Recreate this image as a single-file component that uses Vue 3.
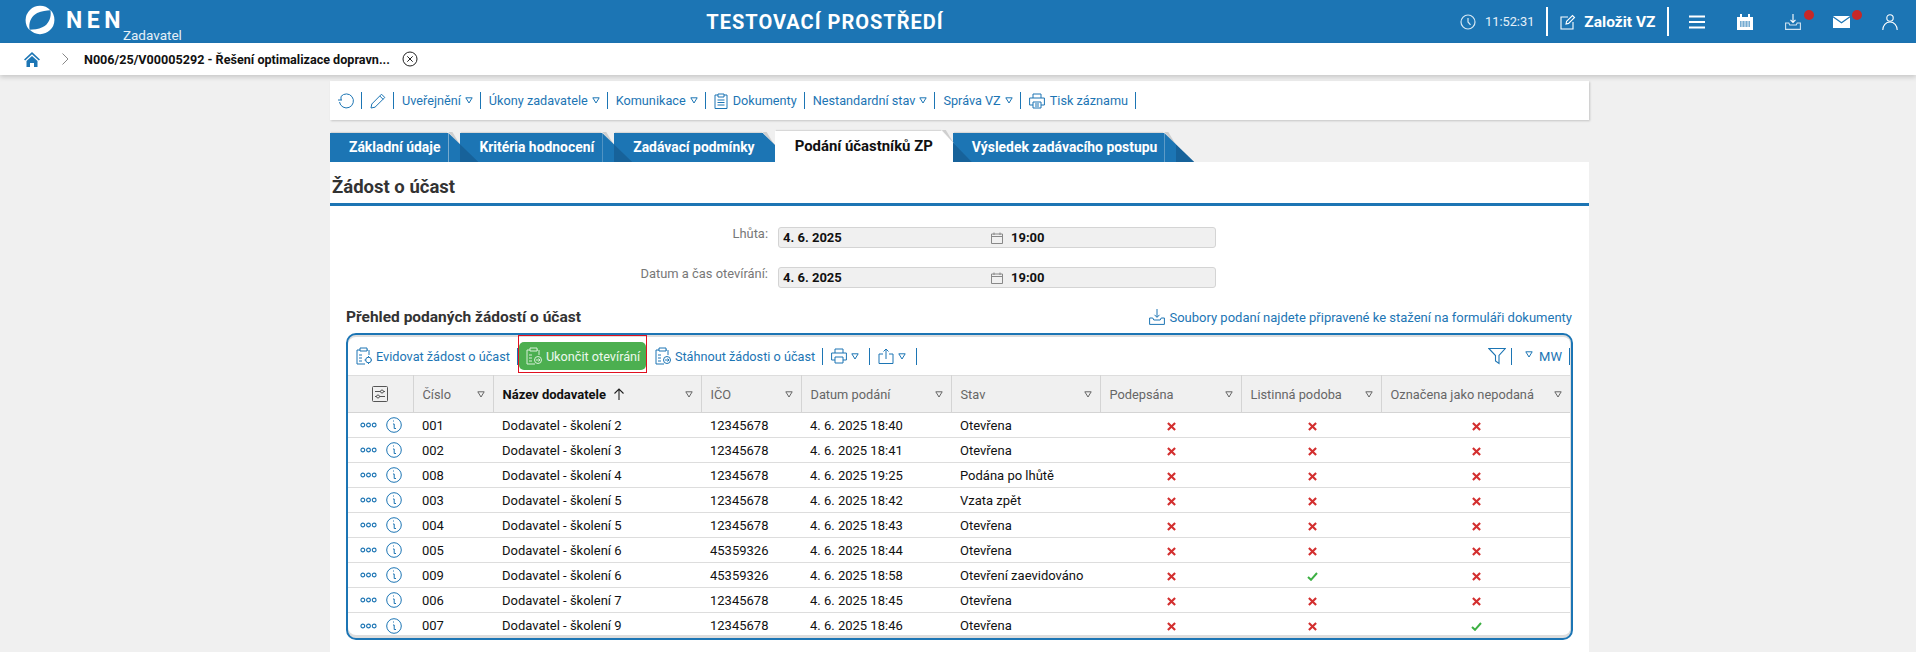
<template>
  <div class="page">
    <header class="topbar">
      <div class="brand">
        <svg class="logo" viewBox="0 0 32 32" width="30" height="30" fill="#fff">
          <path d="M27 5.500A15.200 15.200 0 0 0 5 27C3.500 20 6 12 13 8.500 18 6 23 5.800 27 5.500z" />
          <path d="M27 5.500A15.200 15.200 0 0 0 5 27C3.500 20 6 12 13 8.500 18 6 23 5.800 27 5.500z" transform="rotate(180 16 16)" />
        </svg>
        <span class="nen">NEN</span>
        <span class="role">Zadavatel</span>
      </div>
      <div class="env">TESTOVACÍ PROSTŘEDÍ</div>
      <div class="top-right">
        <svg class="ic clock" viewBox="0 0 16 16" width="16" height="16" fill="none" stroke="#d7e8f4" stroke-width="1.200"><circle cx="8" cy="8" r="7" /><path d="M8 4v4l2.500 2.800" /></svg>
        <span class="time">11:52:31</span>
        <i class="top-sep"></i>
        <svg class="ic" viewBox="0 0 16 16" width="16" height="16" fill="none" stroke="#fff" stroke-width="1.100"><path d="M8 3H1v12h12V8" /><path d="M6 10l.6-2.600L12.500 1.500l2 2-5.900 5.900z" /></svg>
        <span class="create">Založit VZ</span>
        <i class="top-sep"></i>
        <svg class="ic menu" viewBox="0 0 16 14" width="16" height="14" fill="none" stroke="#fff" stroke-width="2"><path d="M0 1.500h16M0 7h16M0 12.500h16" /></svg>
        <svg class="ic cal" viewBox="0 0 16 16" width="16" height="16"><path d="M0 3h3V0h2v3h6V0h2v3h3v13H0z" fill="#fff" /><path d="M3 7h10v6H3z" fill="#1c75b4" /><path d="M3 8h10M3 10h10M3 12h10M5 7v6M8 7v6M11 7v6" stroke="#fff" stroke-width=".8" /></svg>
        <span class="badge-wrap dl">
          <svg viewBox="0 0 16 16" width="16" height="16" fill="none" stroke="#fff" stroke-width="1.100"><path d="M8 0v8M5.500 5.800L8 8.400l2.500-2.600" /><path d="M.6 9h3.200l1 2h6.400l1-2h3.200v6.400H.6z" stroke="#cfe3f1" /></svg>
          <b class="dot"></b>
        </span>
        <span class="badge-wrap ml">
          <svg viewBox="0 0 17 12" width="17" height="12"><path d="M0 0h17L8.500 6z" fill="#fff" /><path d="M0 1.500l8.500 6 8.500-6V12H0z" fill="#fff" /></svg>
          <b class="dot"></b>
        </span>
        <svg class="ic usr" viewBox="0 0 16 16" width="16" height="16" fill="none" stroke="#fff" stroke-width="1.100"><circle cx="8" cy="4" r="3.200" /><path d="M.8 16c0-4.500 3-8 7.200-8s7.200 3.500 7.200 8" /></svg>
      </div>
    </header>

    <nav class="crumbs">
      <svg class="home" viewBox="0 0 16 15" width="16" height="15"><path d="M8 0L0 7.500l1.200 1L8 2.200l6.800 6.300 1.200-1z" fill="#1c75b4" /><path d="M2.500 9L8 4l5.500 5v6H10v-4H6v4H2.500z" fill="#1c75b4" /></svg>
      <svg class="chev" viewBox="0 0 7 12" width="7" height="12" fill="none" stroke="#888"><path d="M.5.500L6 6 .5 11.500" /></svg>
      <span class="crumb-text">N006/25/V00005292 - Řešení optimalizace dopravn...</span>
      <svg class="close" viewBox="0 0 16 16" width="16" height="16" fill="none" stroke="#222"><circle cx="8" cy="8" r="7" /><path d="M5.300 5.300l5.400 5.400M10.700 5.300l-5.400 5.400" /></svg>
    </nav>

    <main class="main">
      <div class="actions">
        <svg class="ic" viewBox="0 0 16 16" width="16" height="16" fill="none" stroke="#1c75b4" stroke-width="1"><path d="M3 3.500A7 7 0 1 1 1.500 9" /><path d="M0 7h4M3 3.500V7" /></svg>
        <i class="sep"></i>
        <svg class="ic" viewBox="0 0 16 16" width="16" height="16" fill="none" stroke="#1c75b4" stroke-width="1"><path d="M1 15l.8-4L11.500 1.200l3.300 3.300L5 14.200zM9.800 3l3.300 3.300" /></svg>
        <i class="sep"></i>
        <template v-for="a in actions" :key="a.label">
          <svg v-if="a.icon === 'doc'" class="ic doc" viewBox="0 0 14 16" width="14" height="16" fill="none" stroke="#1c75b4"><path d="M4 2H1v13.500h12V2h-3" /><path d="M4 1h6v3H4zM3.500 7h7M3.500 9.500h7M3.500 12h7" /></svg>
          <svg v-if="a.icon === 'print'" class="ic doc" viewBox="0 0 16 16" width="16" height="16" fill="none" stroke="#1c75b4"><path d="M4 5V1h8v4M4 12H.6V5h14.800v7H12" /><path d="M4 9h8v6H4zM6 11h4M6 13h4" /></svg>
          <span class="act">{{ a.label }}</span>
          <svg v-if="a.menu" class="tri" viewBox="0 0 8 7" width="8" height="7" fill="none" stroke="#1c75b4"><path d="M.8.800h6.400L4 6z" /></svg>
          <i class="sep"></i>
        </template>
      </div>

      <div class="tabs">
        <div v-for="t in tabs" :key="t" class="tab" :class="{ active: t === activeTab }">{{ t }}</div>
      </div>

      <section class="card">
        <h1 class="card-title">Žádost o účast</h1>

        <div class="form">
          <div v-for="f in fields" :key="f" class="form-row">
            <label class="form-label">{{ f }}:</label>
            <div class="input">
              <span class="date">4. 6. 2025</span>
              <svg class="cal-ic" viewBox="0 0 12 12" width="12" height="12" fill="none" stroke="#888"><path d="M.5 2h11v9.500H.5zM.5 4.500h11M3 .5V3M9 .5V3" /></svg>
              <span class="date">19:00</span>
            </div>
          </div>
        </div>

        <div class="list-head">
          <h2>Přehled podaných žádostí o účast</h2>
          <span class="files">
            <svg viewBox="0 0 16 16" width="16" height="16" fill="none" stroke="#1c75b4"><path d="M8 0v8M5.500 5.800L8 8.400l2.500-2.600" /><path d="M.6 9h3.200l1 2h6.400l1-2h3.200v6.400H.6z" /></svg>
            Soubory podaní najdete připravené ke stažení na formuláři dokumenty
          </span>
        </div>

        <div class="box">
          <div class="box-bar">
            <svg class="ic" viewBox="0 0 16 18" width="16" height="18" fill="none" stroke="#1c75b4"><path d="M4 3H1v14h8M12 3h-1M13 3v5" /><path d="M4 1h7v3H4zM3 8h3M3 11h3M3 14h3" /><circle cx="12.500" cy="13" r="2.800" /><path d="M12.500 9v1.500M12.500 15.500V17M8.500 13H10M15 13h1.500" /></svg>
            <span class="act">Evidovat žádost o účast</span>
            <i class="sep bar-sep"></i>
            <div class="marked">
              <button class="finish">
                <svg viewBox="0 0 16 18" width="16" height="18" fill="none" stroke="#d8efd9"><path d="M4 3H1v14h8M12 3h-1M13 3v5" /><path d="M4 1h7v3H4zM3 8h3M3 11h3M3 14h3" /><circle cx="12" cy="13" r="3.500" /><path d="M10 13h4M12.500 11.500L14 13l-1.500 1.500" /></svg>
                Ukončit otevírání
              </button>
            </div>
            <svg class="ic after-mark" viewBox="0 0 16 18" width="16" height="18" fill="none" stroke="#1c75b4"><path d="M4 3H1v14h8M12 3h-1M13 3v5" /><path d="M4 1h7v3H4zM3 8h3M3 11h3M3 14h3" /><circle cx="12" cy="13" r="3.500" /><path d="M10 13h4M12.500 11.500L14 13l-1.500 1.500" /></svg>
            <span class="act">Stáhnout žádosti o účast</span>
            <i class="sep"></i>
            <svg class="ic" viewBox="0 0 16 16" width="16" height="16" fill="none" stroke="#1c75b4"><path d="M4 5V1h8v4M4 12H.6V5h14.800v7H12" /><path d="M4 9h8v6H4z" /></svg>
            <svg class="tri gap" viewBox="0 0 8 7" width="8" height="7" fill="none" stroke="#1c75b4"><path d="M.8.800h6.400L4 6z" /></svg>
            <i class="sep"></i>
            <svg class="ic" viewBox="0 0 16 16" width="16" height="16" fill="none" stroke="#1c75b4"><path d="M5 6H1v9.500h14V6h-4M8 11V1M5.500 3.500L8 1l2.500 2.500" /></svg>
            <svg class="tri gap" viewBox="0 0 8 7" width="8" height="7" fill="none" stroke="#1c75b4"><path d="M.8.800h6.400L4 6z" /></svg>
            <i class="sep"></i>
            <span class="spacer"></span>
            <svg viewBox="0 0 18 18" width="18" height="18" fill="none" stroke="#1c75b4" stroke-width="1.100"><path d="M.8 1.500h16.400L11 8.500V16.500L7.500 14V8.500z" /></svg>
            <i class="sep filter-sep"></i>
            <svg class="tri mw-tri" viewBox="0 0 8 7" width="8" height="7" fill="none" stroke="#1c75b4"><path d="M.8.800h6.400L4 6z" /></svg>
            <span class="act mw">MW</span>
            <i class="sep last-sep"></i>
          </div>

          <table class="grid">
            <colgroup>
              <col style="width: 65px" />
              <col v-for="c in columns" :key="c.label" :style="{ width: c.width + 'px' }" />
            </colgroup>
            <thead>
              <tr>
                <th class="cfg">
                  <svg viewBox="0 0 16 16" width="16" height="16" fill="none" stroke="#555"><rect x=".5" y=".5" width="15" height="15" rx="1" /><path d="M3 5.500h10M3 10.500h10" /><circle cx="10" cy="5.500" r="1.500" fill="#f0f0f0" /><circle cx="6" cy="10.500" r="1.500" fill="#f0f0f0" /></svg>
                </th>
                <th v-for="c in columns" :key="c.label" :class="{ sorted: c.sorted }">
                  <div class="th-in">
                    <span>{{ c.label }}</span>
                    <svg v-if="c.sorted" class="arrow" viewBox="0 0 12 12" width="12" height="12" fill="none" stroke="#222" stroke-width="1.100"><path d="M6 12V1M1.500 5.500L6 1l4.500 4.500" /></svg>
                    <svg class="th-tri" viewBox="0 0 8 7" width="8" height="7" fill="none" stroke="#666"><path d="M.8.800h6.400L4 6z" /></svg>
                  </div>
                </th>
              </tr>
            </thead>
            <tbody>
              <tr v-for="r in rows" :key="r.no">
                <td class="row-ic">
                  <svg class="dots" viewBox="0 0 18 6" width="17" height="6" fill="none" stroke="#1c75b4" stroke-width="1.200"><circle cx="3" cy="3" r="2" /><circle cx="9" cy="3" r="2" /><circle cx="15" cy="3" r="2" /></svg>
                  <svg class="info" viewBox="0 0 16 16" width="16" height="16" fill="none" stroke="#1c75b4"><circle cx="8" cy="8" r="7.300" /><path d="M7 4h1M7 7h1.200v4.500H10" /></svg>
                </td>
                <td>{{ r.no }}</td>
                <td>{{ r.name }}</td>
                <td>{{ r.ico }}</td>
                <td>{{ r.date }}</td>
                <td>{{ r.state }}</td>
                <td v-for="(flag, i) in r.flags" :key="i" class="flag">
                  <svg v-if="flag" viewBox="0 0 11 9" width="11" height="9" fill="none" stroke="#3cb043" stroke-width="2"><path d="M1 5l3 2.800L10 1" /></svg>
                  <svg v-else viewBox="0 0 10 10" width="9" height="9" fill="none" stroke="#d32f2f" stroke-width="2.400"><path d="M1 1l8 8M9 1L1 9" /></svg>
                </td>
              </tr>
            </tbody>
          </table>
        </div>
      </section>
    </main>
  </div>
</template>

<script setup>
const activeTab = 'Podání účastníků ZP'
const tabs = ['Základní údaje', 'Kritéria hodnocení', 'Zadávací podmínky', activeTab, 'Výsledek zadávacího postupu']

const actions = [
  { label: 'Uveřejnění', menu: true },
  { label: 'Úkony zadavatele', menu: true },
  { label: 'Komunikace', menu: true },
  { label: 'Dokumenty', icon: 'doc' },
  { label: 'Nestandardní stav', menu: true },
  { label: 'Správa VZ', menu: true },
  { label: 'Tisk záznamu', icon: 'print' },
]

const fields = ['Lhůta', 'Datum a čas otevírání']

const columns = [
  { label: 'Číslo', width: 80 },
  { label: 'Název dodavatele', width: 208, sorted: true },
  { label: 'IČO', width: 100 },
  { label: 'Datum podání', width: 150 },
  { label: 'Stav', width: 149 },
  { label: 'Podepsána', width: 141 },
  { label: 'Listinná podoba', width: 140 },
  { label: 'Označena jako nepodaná', width: 189 },
]

const rows = [
  { no: '001', name: 'Dodavatel - školení 2', ico: '12345678', date: '4. 6. 2025 18:40', state: 'Otevřena', flags: [0, 0, 0] },
  { no: '002', name: 'Dodavatel - školení 3', ico: '12345678', date: '4. 6. 2025 18:41', state: 'Otevřena', flags: [0, 0, 0] },
  { no: '008', name: 'Dodavatel - školení 4', ico: '12345678', date: '4. 6. 2025 19:25', state: 'Podána po lhůtě', flags: [0, 0, 0] },
  { no: '003', name: 'Dodavatel - školení 5', ico: '12345678', date: '4. 6. 2025 18:42', state: 'Vzata zpět', flags: [0, 0, 0] },
  { no: '004', name: 'Dodavatel - školení 5', ico: '12345678', date: '4. 6. 2025 18:43', state: 'Otevřena', flags: [0, 0, 0] },
  { no: '005', name: 'Dodavatel - školení 6', ico: '45359326', date: '4. 6. 2025 18:44', state: 'Otevřena', flags: [0, 0, 0] },
  { no: '009', name: 'Dodavatel - školení 6', ico: '45359326', date: '4. 6. 2025 18:58', state: 'Otevření zaevidováno', flags: [0, 1, 0] },
  { no: '006', name: 'Dodavatel - školení 7', ico: '12345678', date: '4. 6. 2025 18:45', state: 'Otevřena', flags: [0, 0, 0] },
  { no: '007', name: 'Dodavatel - školení 9', ico: '12345678', date: '4. 6. 2025 18:46', state: 'Otevřena', flags: [0, 0, 1] },
]
</script>

<style>
html, body {
  margin: 0;
  background: #f0f0f0;
  overflow: hidden;
}
</style>

<style scoped>
.page {
  height: 652px;
  overflow: hidden;
  font-family: Roboto, "Liberation Sans", sans-serif;
  font-size: 13px;
  color: #111;
}

.topbar {
  height: 43px;
  background: #1c75b4;
  display: flex;
  align-items: center;
  color: #fff;
}
.brand {
  display: flex;
  align-items: flex-start;
  width: 190px;
  height: 43px;
  flex: none;
}
.logo {
  margin: 5px 0 0 25px;
}
.nen {
  font-size: 23px;
  font-weight: 700;
  letter-spacing: 4.500px;
  margin: 7px 0 0 11px;
  line-height: 27px;
}
.role {
  font-size: 13.500px;
  line-height: 16px;
  margin: 27px 0 0 -2px;
  color: #e4f0f8;
}
.env {
  flex: 1;
  text-align: center;
  font-size: 20px;
  font-weight: 700;
  letter-spacing: 1px;
}
.top-right {
  display: flex;
  align-items: center;
  width: 456px;
  flex: none;
}
.time {
  margin-left: 9px;
  font-size: 12.800px;
  color: #e4f0f8;
}
.top-sep {
  width: 2px;
  height: 29px;
  background: #fff;
  margin: 0 12px;
}
.create {
  font-size: 15.500px;
  font-weight: 700;
  margin-left: 8px;
}
.menu { margin-left: 8px; }
.cal { margin-left: 32px; }
.badge-wrap {
  position: relative;
  display: inline-flex;
}
.dl { margin-left: 32px; }
.ml { margin-left: 32px; }
.usr { margin-left: 32px; }
.dot {
  position: absolute;
  top: -4px;
  right: -13px;
  width: 10px;
  height: 10px;
  border-radius: 50%;
  background: #c62828;
}
.ml .dot { top: -6px; right: -12px; }

.crumbs {
  height: 32px;
  background: #fff;
  display: flex;
  align-items: center;
  box-shadow: 0 2px 5px rgba(0, 0, 0, 0.18);
  position: relative;
}
.home { margin-left: 24px; }
.chev { margin-left: 22px; }
.crumb-text {
  margin-left: 15px;
  font-weight: 700;
  font-size: 12.600px;
}
.close { margin-left: 12px; }

.main {
  margin: 6px 0 0 330px;
  width: 1259px;
}
.actions {
  height: 39px;
  background: #fff;
  box-shadow: 1px 1px 2px rgba(0, 0, 0, 0.18);
  display: flex;
  align-items: center;
  padding-left: 8px;
  color: #1c75b4;
}
.ic { flex: none; }
.sep {
  width: 1px;
  height: 17px;
  background: #1c75b4;
  margin: 0 8px 0 7px;
  flex: none;
}
.act {
  color: #1c75b4;
  white-space: nowrap;
  font-size: 12.700px;
}
.doc { margin-right: 5px; }
.tri { margin-left: 4px; flex: none; }

.tabs {
  display: flex;
  margin-top: 13px;
  height: 29px;
  align-items: flex-end;
}
.tab {
  position: relative;
  height: 29px;
  line-height: 28px;
  background: #1c75b4;
  color: #fff;
  font-weight: 700;
  font-size: 13.900px;
  padding: 0 8px 0 19px;
  margin-right: 12px;
  box-sizing: border-box;
  box-shadow: 0 -2px 1px -1px #d8d8d8;
}
.tab:last-child { padding-right: 7px; }
.tab::before {
  content: "";
  position: absolute;
  left: 100%;
  top: -1px;
  width: 13px;
  height: 15px;
  z-index: 1;
  clip-path: polygon(0 0, 4px 0, 100% 100%, 100% 100%);
  background: #cfcfcf;
}
.tab::after {
  content: "";
  position: absolute;
  left: 100%;
  top: 0;
  width: 30px;
  height: 29px;
  z-index: 1;
  clip-path: polygon(0 0, 100% 100%, 0 100%);
  background: linear-gradient(to right, #1c75b4 12px, #17629a 12px);
}
.tab.active {
  background: #fff;
  color: #111;
  font-size: 14.900px;
  height: 31px;
  z-index: 2;
  padding: 0 9px 0 20px;
  margin-right: 11px;
  line-height: 30px;
}
.tab.active::after {
  background: linear-gradient(to right, #fff 11px, #17629a 11px);
  height: 31px;
}

.card {
  background: #fff;
  height: 490px;
}
.card-title {
  margin: 0;
  box-sizing: border-box;
  padding: 14px 0 0 2px;
  font-size: 18.500px;
  line-height: 22px;
  font-weight: 700;
  color: #333;
  border-bottom: 3px solid #1c75b4;
  height: 44px;
}
.form {
  padding-top: 21px;
}
.form-row {
  display: flex;
  margin-bottom: 19px;
}
.form-label {
  width: 438px;
  text-align: right;
  color: #777;
  line-height: 16px;
  margin-top: -1px;
  font-size: 12.900px;
}
.input {
  margin-left: 10px;
  width: 438px;
  height: 21px;
  box-sizing: border-box;
  background: #f0f0f0;
  border: 1px solid #d4d4d4;
  border-radius: 3px;
  display: flex;
  align-items: center;
  padding-left: 4px;
}
.date {
  font-weight: 700;
  font-size: 13px;
  color: #111;
}
.input .date:first-child {
  width: 208px;
}
.cal-ic {
  margin-right: 8px;
}
.list-head {
  display: flex;
  justify-content: space-between;
  align-items: center;
  height: 20px;
  margin: 10px 17px 0 16px;
}
.list-head h2 {
  margin: 0;
  font-size: 15.500px;
  font-weight: 700;
  color: #333;
}
.files {
  display: flex;
  align-items: center;
  gap: 4px;
  color: #1c75b4;
  font-size: 13px;
}

.box {
  margin: 6px 16px 0 16px;
  height: 307px;
  box-sizing: border-box;
  border: 2px solid #1c75b4;
  border-radius: 10px;
  box-shadow: inset 0 2px 0 #ddd, inset 0 -3px 0 #ddd, inset -1px 0 0 #ddd;
  overflow: hidden;
}
.box-bar {
  height: 40px;
  box-sizing: border-box;
  padding-top: 2px;
  display: flex;
  align-items: center;
  padding-left: 8px;
}
.box-bar .act { margin-left: 4px; }
.bar-sep { margin: 0 0 0 7px; }
.filter-sep { margin-left: 4.500px; }
.marked {
  border: 1px solid #e01020;
  padding-top: 6px;
  margin-bottom: 4px;
  height: 38px;
  box-sizing: border-box;
  width: 129px;
}
.finish {
  width: 127px;
  height: 28px;
  background: #4caf50;
  border: none;
  border-radius: 5px;
  color: #eef8ee;
  font: inherit;
  font-size: 12.700px;
  display: flex;
  align-items: center;
  gap: 4px;
  padding: 0 0 0 7px;
  white-space: nowrap;
}
.after-mark { margin-left: 8px; }
.gap { margin-right: 3px; }
.spacer { flex: 1; }
.mw-tri { margin-left: 5px; margin-top: -4px; }
.box-bar .mw { font-size: 13px; margin-left: 6.500px; }
.last-sep { margin-right: 1px; }

.grid {
  table-layout: fixed;
  border-collapse: collapse;
  width: 1222px;
}
.grid th {
  height: 37px;
  background: #f0f0f0;
  border-top: 1px solid #ddd;
  border-bottom: 1px solid #d4d4d4;
  border-right: 1px solid #d4d4d4;
  padding: 0 8px 0 9px;
  text-align: left;
  font-weight: 400;
  font-size: 12.800px;
  color: #666;
  box-sizing: border-box;
}
.grid th:last-child { border-right: none; }
.th-in {
  display: flex;
  align-items: center;
}
.th-in span { white-space: nowrap; }
.th-tri {
  margin-left: auto;
  flex: none;
}
.grid th.sorted { color: #111; font-weight: 700; font-size: 13px; }
.arrow { margin-left: 7px; }
.grid th.cfg {
  text-align: center;
  padding: 0;
}
.cfg svg { display: block; margin: 0 auto; }
.grid td {
  height: 25px;
  padding: 0 9px;
  border-bottom: 1px solid #ddd;
  box-sizing: border-box;
  color: #111;
  white-space: nowrap;
}
.grid tbody tr:last-child td { border-bottom: none; }
.grid td.row-ic {
  padding: 0 0 0 12px;
}
.row-ic svg { vertical-align: middle; }
.dots { margin-right: 9px; }
.grid td.flag {
  text-align: center;
  padding: 0 0 0 2px;
}
.flag svg { display: inline-block; vertical-align: middle; }
</style>
